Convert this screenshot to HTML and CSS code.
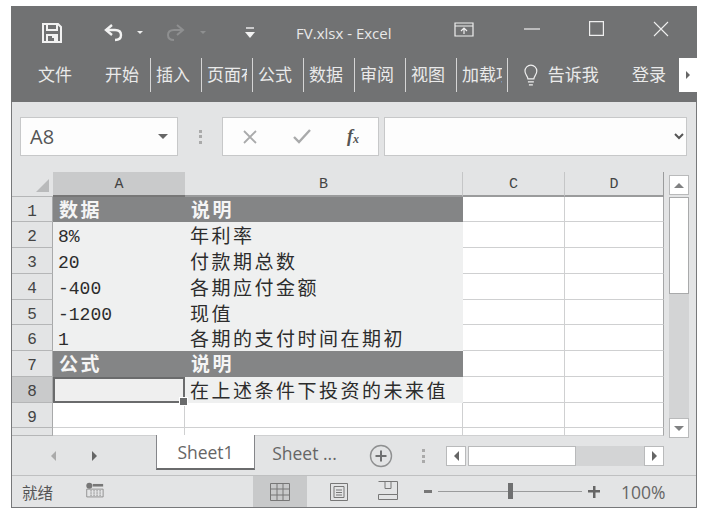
FILE: index.html
```html
<!DOCTYPE html>
<html lang="zh">
<head>
<meta charset="utf-8">
<title>FV.xlsx - Excel</title>
<link rel="stylesheet" href="styles.css">
</head>
<body>
<div class="window">
  <header class="titlebar">
    <svg class="qa save" width="22" height="22" viewBox="0 0 22 22"><path d="M2 2h15l3 3v15H2z M6 3v5h10V3 M6 20v-7h10v7 M11 15h3v5" fill="none" stroke="#f2f2f2" stroke-width="2"/></svg>
    <svg class="qa undo" width="22" height="20" viewBox="0 0 22 20"><path d="M9 2 3 7l6 5" fill="none" stroke="#f2f2f2" stroke-width="2.4"/><path d="M3 7h9c4 0 6 2 6 5s-2 5-6 5" fill="none" stroke="#f2f2f2" stroke-width="2.4"/></svg>
    <span class="caret on"></span>
    <svg class="qa redo" width="20" height="18" viewBox="0 0 20 18"><path d="M12 1l6 5-6 5" fill="none" stroke="#8e8f90" stroke-width="2"/><path d="M18 6H9C5 6 3 8 3 11s2 5 6 5" fill="none" stroke="#8e8f90" stroke-width="2"/></svg>
    <span class="caret off"></span>
    <svg class="qa custom" width="10" height="12" viewBox="0 0 10 12"><path d="M1 1h8" stroke="#f2f2f2" stroke-width="1.4"/><path d="M0 5h10L5 11z" fill="#f2f2f2"/></svg>
    <span class="doc">FV.xlsx - Excel</span>
    <svg class="ribbon-opt" width="20" height="15" viewBox="0 0 20 15"><path d="M1 1h18v13H1z M1 4h18" fill="none" stroke="#efefef" stroke-width="1.2"/><path d="M10 12V6M7 9l3-3 3 3" fill="none" stroke="#efefef" stroke-width="1.2"/></svg>
    <svg class="win-min" width="16" height="2" viewBox="0 0 16 2"><path d="M0 1h16" stroke="#efefef" stroke-width="1.2"/></svg>
    <svg class="win-max" width="15" height="15" viewBox="0 0 15 15"><path d="M.6.6h13.8v13.8H.6z" fill="none" stroke="#efefef" stroke-width="1.2"/></svg>
    <svg class="win-close" width="16" height="16" viewBox="0 0 16 16"><path d="M1 1l14 14M15 1 1 15" stroke="#efefef" stroke-width="1.1"/></svg>
  </header>

  <nav class="tabs">
    <span class="tab first">文件</span>
    <span class="tab home">开始</span>
    <span class="tab sep">插入</span>
    <span class="tab sep"><span class="clip">页面布局</span></span>
    <span class="tab sep">公式</span>
    <span class="tab sep">数据</span>
    <span class="tab sep">审阅</span>
    <span class="tab sep">视图</span>
    <span class="tab sep last"><span class="clip">加载项</span></span>
    <svg class="bulb" width="16" height="26" viewBox="0 0 16 26"><path d="M5 16c0-3-3-4-3-8a6 6 0 0 1 12 0c0 4-3 5-3 8z M5 19h6M6 22h4" fill="none" stroke="#efefef" stroke-width="1.2"/></svg>
    <span class="tell">告诉我</span>
    <span class="login">登录</span>
    <span class="more"><i></i></span>
  </nav>

  <section class="fbar">
    <div class="namebox"><span>A8</span><i class="down"></i></div>
    <span class="vdots"></span>
    <div class="fbtns">
      <svg width="14" height="14" viewBox="0 0 14 14"><path d="M1 1l12 12M13 1 1 13" stroke="#a9aaab" stroke-width="1.8"/></svg>
      <svg width="18" height="15" viewBox="0 0 18 15"><path d="M1 8l5 5L17 1" fill="none" stroke="#a9aaab" stroke-width="2.4"/></svg>
      <span class="fx">f<sub>x</sub></span>
    </div>
    <div class="finput">
      <svg width="10" height="7" viewBox="0 0 10 7"><path d="M1 1l4 4 4-4" fill="none" stroke="#555" stroke-width="2"/></svg>
    </div>
  </section>

  <main class="work">
    <div class="grid">
      <div class="corner"><i></i></div>
      <div class="colh sel">A</div>
      <div class="colh">B</div>
      <div class="colh">C</div>
      <div class="colh">D</div>

      <div class="rowh">1</div><div class="cell head">数据</div><div class="cell head">说明</div><div class="cell"></div><div class="cell"></div>
      <div class="rowh">2</div><div class="cell fill num">8%</div><div class="cell fill cjk">年利率</div><div class="cell"></div><div class="cell"></div>
      <div class="rowh">3</div><div class="cell fill num">20</div><div class="cell fill cjk">付款期总数</div><div class="cell"></div><div class="cell"></div>
      <div class="rowh">4</div><div class="cell fill num">-400</div><div class="cell fill cjk">各期应付金额</div><div class="cell"></div><div class="cell"></div>
      <div class="rowh">5</div><div class="cell fill num">-1200</div><div class="cell fill cjk">现值</div><div class="cell"></div><div class="cell"></div>
      <div class="rowh">6</div><div class="cell fill num">1</div><div class="cell fill cjk">各期的支付时间在期初</div><div class="cell"></div><div class="cell"></div>
      <div class="rowh">7</div><div class="cell head">公式</div><div class="cell head">说明</div><div class="cell"></div><div class="cell"></div>
      <div class="rowh sel">8</div><div class="cell fill active"></div><div class="cell fill cjk">在上述条件下投资的未来值</div><div class="cell"></div><div class="cell"></div>
      <div class="rowh">9</div><div class="cell"></div><div class="cell"></div><div class="cell"></div><div class="cell"></div>
      <div class="rowh"></div><div class="cell"></div><div class="cell"></div><div class="cell"></div><div class="cell"></div>
    </div>
    <div class="vscroll">
      <span class="sbtn"><i class="tri up"></i></span>
      <span class="vthumb"></span>
      <span class="vtrack"></span>
      <span class="sbtn"><i class="tri dn"></i></span>
    </div>
  </main>

  <section class="sheets">
    <div class="nav"><i class="tri lf dim"></i><i class="tri rt"></i></div>
    <div class="stab active">Sheet1</div>
    <div class="stab">Sheet ...</div>
    <svg class="plus" width="24" height="24" viewBox="0 0 24 24"><circle cx="12" cy="12" r="10.5" fill="none" stroke="#8f9091" stroke-width="1.4"/><path d="M12 6.500v11M6.500 12h11" stroke="#6f7071" stroke-width="2"/></svg>
    <span class="vdots small"></span>
    <div class="hscroll">
      <span class="sbtn"><i class="tri lf"></i></span>
      <span class="hthumb"></span>
      <span class="htrack"></span>
      <span class="sbtn"><i class="tri rt"></i></span>
    </div>
  </section>

  <footer class="status">
    <span class="ready">就绪</span>
    <svg class="macro" width="19" height="18" viewBox="0 0 22 18"><circle cx="5" cy="4" r="3.500" fill="#777"/><path d="M9 2h12v3H9z" fill="#777"/><path d="M2 8h19v9H2z" fill="none" stroke="#888"/><path d="M6 10h13M6 12.500h13M6 15h13" stroke="#888" stroke-dasharray="2 1.500"/></svg>
    <span class="view on"><svg width="20" height="18" viewBox="0 0 20 18"><path d="M.5.500h19v17H.5zM.5 6h19M.5 12h19M7 .500v17M13 .500v17" fill="none" stroke="#777"/></svg></span>
    <span class="view mid"><svg width="18" height="18" viewBox="0 0 18 18"><path d="M.5.500h17v17H.5z" fill="none" stroke="#777"/><path d="M4 3.500h10v11H4zM6 7h6M6 9.500h6M6 12h6" fill="none" stroke="#777"/></svg></span>
    <span class="view brk"><svg width="20" height="19" viewBox="0 0 20 19"><path d="M.5.500h19v13H.5v5h19v-5M7 .500v7h6v-7" fill="none" stroke="#777"/></svg></span>
    <span class="minus"></span>
    <span class="slider"><i></i></span>
    <span class="zplus"></span>
    <span class="pct">100%</span>
  </footer>
</div>
</body>
</html>
```
FILE: styles.css
```css
* { box-sizing: border-box; }
html, body { margin: 0; background: #fff; }
body { padding: 6px 0 0 11px; font-family: "Liberation Sans", "Noto Sans CJK SC", sans-serif; }
i { display: block; }

.window {
  width: 686px; height: 502px;
  display: flex; flex-direction: column;
  background: #e3e4e5;
  border: 1px solid #77787a; border-top: 0;
}

.titlebar {
  height: 50px; flex: none; margin: 0 -1px; padding-top: 3px;
  background: #717273; color: #eee;
  display: flex; align-items: center; position: relative;
}
.qa.save { margin-left: 30px; }
.qa.undo { margin-left: 40px; }
.caret { width: 0; height: 0; border: 3px solid transparent; border-top: 3px solid #eee; border-bottom: 0; margin-left: 12px; }
.caret.off { border-top-color: #8e8f90; margin-left: 15px; }
.qa.redo { margin-left: 22px; }
.qa.custom { margin-left: 39px; }
.doc { margin-left: 41px; font: 15px "Open Sans", sans-serif; color: #e8e8e8; width: 146px; white-space: nowrap; padding-top: 1px; }
.ribbon-opt { margin-left: 12px; margin-top: -7px; }
.win-min { margin-left: 50px; margin-top: -7px; }
.win-max { margin-left: 49px; margin-top: -8px; }
.win-close { margin-left: 49px; margin-top: -8px; }

.tabs {
  height: 46px; flex: none; margin: 0 -1px; padding-top: 2px;
  background: #717273; color: #eaeaea;
  display: flex; align-items: flex-start;
  font: 17px/32px "Noto Sans CJK SC", sans-serif;
  position: relative;
}
.tab { height: 34px; white-space: nowrap; flex: none; }
.tab.first { margin-left: 27px; width: 67px; }
.tab.home { width: 45px; }
.tab.sep { width: 51px; padding-left: 5px; border-left: 1px solid #d5d5d5; }
.tab.last { border-right: 1px solid #d5d5d5; width: 52px; }
.clip { display: block; width: 40px; overflow: hidden; }
.bulb { margin-left: 15px; margin-top: 5px; }
.tell { margin-left: 9px; width: 66px; white-space: nowrap; }
.login { margin-left: 19px; width: 50px; white-space: nowrap; }
.more { width: 18px; height: 34px; background: #fff; display: flex; align-items: center; justify-content: center; margin-left: -2px; }
.more i { border-left: 4px solid #666; border-top: 4px solid transparent; border-bottom: 4px solid transparent; }

.fbar { height: 70px; flex: none; display: flex; align-items: flex-start; padding: 15px 0 0 8px; }
.namebox, .fbtns, .finput { height: 39px; background: #fdfdfd; border: 1px solid #c7c8c9; display: flex; align-items: center; }
.namebox { width: 158px; padding: 0 9px 0 9px; justify-content: space-between; font: 20px "Open Sans", sans-serif; color: #555; }
.down { border-top: 5px solid #666; border-left: 5px solid transparent; border-right: 5px solid transparent; }
.vdots { width: 3px; height: 14px; margin: 13px 20px 0 21px; background: repeating-linear-gradient(#aaa 0 3px, transparent 3px 5.500px); }
.fbtns { width: 157px; padding-left: 20px; gap: 36px; }
.fx { font: italic bold 18px "Liberation Serif", serif; color: #555; }
.fx sub { font-size: 12px; vertical-align: -1px; }
.finput { width: 303px; margin-left: 5px; justify-content: flex-end; padding-right: 2px; }

.work { height: 264px; flex: none; display: flex; }
.grid {
  width: 652px; height: 264px; flex: none;
  display: grid;
  grid-template-columns: 41px 132px 278px 102px 99px;
  grid-template-rows: 25px 25px 26px 26px 26px 25px 26px 26px 26px 25px 8px;
  background: #fff;
  border-bottom: 1px solid #8a8b8c;
}
.corner { background: #e3e4e5; display: flex; align-items: flex-end; justify-content: flex-end; padding: 0 4px 4px 0; border-bottom: 1px solid #b5b6b7; }
.corner i { width: 0; height: 0; border-bottom: 13px solid #b9babb; border-left: 13px solid transparent; }
.colh {
  background: #e3e4e5; color: #444; padding-top: 4px;
  font: 15px/18px "Liberation Mono", monospace; text-align: center;
  border-right: 1px solid #c5c6c7; border-bottom: 2px solid #9a9b9c;
}
.colh.sel { background: #c9cacb; border-bottom-color: #777; border-right: 0; }
.colh:nth-child(5) { border-right: 1px solid #9a9b9c; }
.rowh {
  background: #e3e4e5; color: #444; padding-top: 6px;
  font: 16px/18px "Liberation Mono", monospace; text-align: center;
  border-right: 1px solid #a8a9aa; border-bottom: 1px solid #b5b6b7;
}
.rowh.sel { background: #c9cacb; }
.cell {
  background: #fff; color: #2c2c2c;
  border-right: 1px solid #cfd0d1; border-bottom: 1px solid #cfd0d1;
  padding-left: 5px; white-space: nowrap; position: relative;
}
.cell:nth-child(5n) { border-right-color: #a5a6a7; }
.cell.fill { background: #eff0f0; border-color: #eff0f0; }
.cell.num { font: 18px/19px "Liberation Mono", monospace; padding-top: 6px; }
.cell.cjk { font: 19px/25px "Noto Sans CJK SC", sans-serif; letter-spacing: 2.500px; }
.cell.head { background: #848586; border-color: #848586; color: #f5f5f5; font: 700 19px/24px "Noto Sans CJK SC", sans-serif; letter-spacing: 2.500px; padding-left: 6px; }
.cell.active { background: #efefef; }
.cell.active::before { content: ""; position: absolute; inset: 0 -1px -1px 0; border: 2.500px solid #6a6b6c; }
.cell.active::after { content: ""; position: absolute; right: -4px; bottom: -4px; width: 7px; height: 7px; background: #6a6b6c; border: 1px solid #fff; z-index: 1; }

.vscroll { width: 20px; margin-left: 5px; height: 263px; margin-top: 3px; display: flex; flex-direction: column; }
.sbtn { width: 20px; height: 20px; flex: none; background: #fff; border: 1px solid #b9babb; display: flex; align-items: center; justify-content: center; }
.vthumb { height: 97px; background: #fff; border: 1px solid #a9aaab; margin-top: 2px; flex: none; }
.vtrack { flex: 1; background: #d3d4d5; }
.tri { width: 0; height: 0; }
.tri.up { border-bottom: 5px solid #808182; border-left: 5px solid transparent; border-right: 5px solid transparent; }
.tri.dn { border-top: 5px solid #808182; border-left: 5px solid transparent; border-right: 5px solid transparent; }
.tri.lf { border-right: 5px solid #666; border-top: 5px solid transparent; border-bottom: 5px solid transparent; }
.tri.rt { border-left: 5px solid #666; border-top: 5px solid transparent; border-bottom: 5px solid transparent; }
.tri.dim { border-right-color: #aaa; }

.sheets { height: 40px; flex: none; display: flex; align-items: flex-start; border-bottom: 1px solid #bfc0c1; position: relative; }
.nav { width: 144px; padding: 15px 0 0 39px; display: flex; gap: 36px; }
.stab { height: 34px; width: 99px; text-align: center; font: 17.500px/34px "Open Sans", sans-serif; color: #666; white-space: nowrap; }
.stab.active { background: #fff; margin-top: -1px; height: 35px; border: 1px solid #85868a; border-top: 0; border-bottom: 2px solid #6a6b6c; line-height: 35px; }
.plus { margin: 8px 0 0 15px; }
.vdots.small { margin: 13px 0 0 29px; }
.hscroll { display: flex; margin: 10px 0 0 21px; width: 218px; height: 20px; }
.hthumb { width: 108px; background: #fff; border: 1px solid #b9babb; margin-left: 2px; }
.htrack { flex: 1; background: #d3d4d5; }

.status { height: 31px; flex: none; display: flex; align-items: center; color: #555; position: relative; }
.ready { margin-left: 10px; font: 15.500px "Noto Sans CJK SC", sans-serif; width: 34px; white-space: nowrap; }
.macro { margin-left: 29px; margin-top: -4px; }
.view { display: flex; align-items: center; justify-content: center; height: 31px; flex: none; }
.view.on { width: 54px; margin-left: 149px; background: #c8c9ca; }
.view.mid { margin-left: 20px; width: 24px; }
.view.brk { margin-left: 27px; width: 20px; margin-top: -3px; }
.minus { width: 8px; height: 3px; background: #777; margin-left: 26px; }
.slider { width: 144px; height: 1px; background: #9a9b9c; margin-left: 6px; position: relative; }
.slider i { position: absolute; left: 70px; top: -8px; width: 5px; height: 16px; background: #6f7071; }
.zplus { width: 12px; height: 12px; margin-left: 6px; background: linear-gradient(#666,#666) center/12px 2.500px no-repeat, linear-gradient(#666,#666) center/2.500px 12px no-repeat; }
.pct { margin-left: 21px; font: 17.500px "Open Sans", sans-serif; color: #666; }
```
